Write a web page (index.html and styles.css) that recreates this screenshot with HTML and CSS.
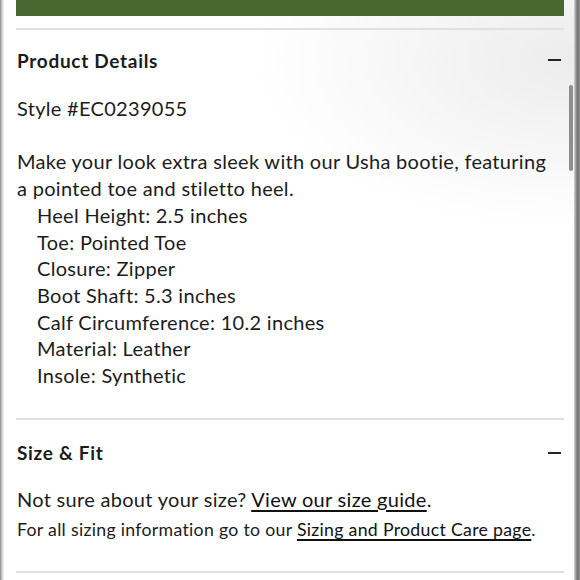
FILE: index.html
```html
<!DOCTYPE html>
<html lang="en">
<head>
<meta charset="utf-8">
<link rel="stylesheet" href="styles.css">
</head>
<body>
<div class="frame">
  <div class="edge-left"></div>
  <main class="page">
    <div class="green-bar"></div>
    <section class="acc">
      <div class="acc-head">
        <h2 class="acc-title">Product Details</h2>
        <span class="minus"></span>
      </div>
      <div class="acc-body details">
        <p>Style #EC0239055</p>
        <p class="blank">&nbsp;</p>
        <p>Make your look extra sleek with our Usha bootie, featuring a pointed toe and stiletto heel.</p>
        <ul class="specs">
          <li>Heel Height: 2.5 inches</li>
          <li>Toe: Pointed Toe</li>
          <li>Closure: Zipper</li>
          <li>Boot Shaft: 5.3 inches</li>
          <li>Calf Circumference: 10.2 inches</li>
          <li>Material: Leather</li>
          <li>Insole: Synthetic</li>
        </ul>
      </div>
    </section>
    <section class="acc acc-fit">
      <div class="acc-head">
        <h2 class="acc-title">Size &amp; Fit</h2>
        <span class="minus"></span>
      </div>
      <div class="acc-body fit">
        <p class="fit-1">Not sure about your size? <a href="#">View our size guide</a>.</p>
        <p class="fit-2">For all sizing information go to our <a href="#">Sizing and Product Care page</a>.</p>
      </div>
    </section>
    <div class="scrollbar"></div>
  </main>
  <div class="edge-right"></div>
</div>
</body>
</html>
```
FILE: styles.css
```css
html, body {
  margin: 0;
  padding: 0;
  width: 580px;
  height: 580px;
  overflow: hidden;
  background: #fff;
}
.frame {
  display: flex;
  width: 580px;
  height: 580px;
}
.edge-left {
  width: 4px;
  flex: none;
  background: linear-gradient(to right, #8a8a8a, #d8d8d8 60%, #f4f4f4);
}
.edge-right {
  width: 6px;
  flex: none;
  background: linear-gradient(to right, #d6d6d6, #8c8c8c 40%, #6f6f6f 70%, #9a9a9a);
}
.page {
  position: relative;
  flex: 1;
  padding: 0 10px 0 12px;
  background: radial-gradient(ellipse 320px 170px at 570px 60px, #ececec, rgba(255,255,255,0) 100%), #fff;
  font-family: Lato, "Liberation Sans", sans-serif;
  color: #1c1c1c;
}
.green-bar {
  height: 16px;
  background: #476630;
}
.acc {
  border-top: 2px solid #e0e0e0;
  margin-top: 12px;
}
.acc + .acc {
  margin-top: 0;
}
.acc-head {
  display: flex;
  align-items: center;
  justify-content: space-between;
  padding: 15px 3px 0 1px;
  height: 30px;
}
.acc-fit .acc-head {
  padding-top: 18px;
}
.acc-title {
  margin: 0;
  font-size: 19px;
  font-weight: 700;
  letter-spacing: 0.7px;
}
.minus {
  width: 13px;
  height: 1.6px;
  background: #222;
}
.acc-body {
  padding: 20px 10px 29px 1px;
  font-size: 20px;
  letter-spacing: 0.3px;
  line-height: 26.7px;
}
.acc-body p {
  margin: 0;
}
.specs {
  list-style: none;
  margin: 0;
  padding: 0 0 0 20px;
}
.fit {
  padding-top: 18px;
  padding-bottom: 24px;
}
.fit-1 {
  line-height: 26px;
}
.fit-2 {
  font-size: 17.7px;
  line-height: 35px;
}
.fit a {
  color: #111;
  text-decoration: underline;
  text-underline-offset: 3px;
  text-decoration-thickness: 1.5px;
}
.acc:last-of-type {
  border-bottom: 2px solid #e0e0e0;
}
.scrollbar {
  position: absolute;
  right: 1px;
  top: 85px;
  width: 4px;
  height: 86px;
  border-radius: 2px;
  background: #8e8e8e;
}
```
